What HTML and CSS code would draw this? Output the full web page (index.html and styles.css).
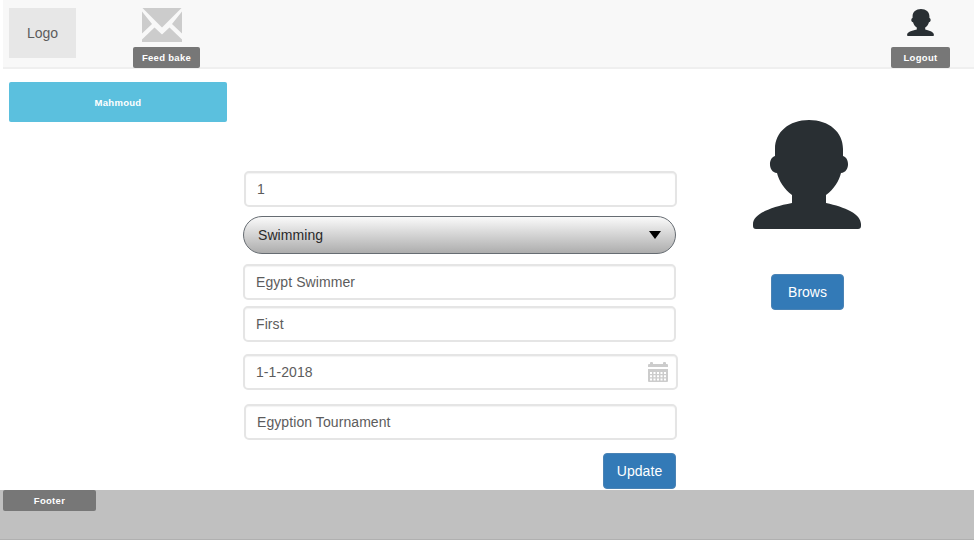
FILE: index.html
```html
<!DOCTYPE html>
<html lang="en">
<head>
<meta charset="utf-8">
<title>Profile</title>
<link rel="stylesheet" href="styles.css">
</head>
<body>
<svg width="0" height="0" class="defs" aria-hidden="true">
  <symbol id="person" viewBox="0 0 108 109">
    <path d="M56 0C76 0 90 12 90 29V36C97 38 97 52 88 53C86 61 81 69 73 75V83C92 87 108 94 108 104V106Q108 109 105 109H3Q0 109 0 106V104C0 94 18 87 39 83V75C31 69 26 61 24 53C15 52 15 38 22 36V29C22 12 36 0 56 0Z"/>
  </symbol>
</svg>
<header class="header">
  <div class="logo">Logo</div>
  <div class="feedback">
    <svg class="mail" viewBox="0 0 40 34"><path d="M.5 0H39.5L20 19.5ZM0 3.5V25.5L10 16ZM40 3.5V25.5L30 16ZM0 34V31.5L12.5 19.5L20 26.5L27.5 19.5L40 31.5V34Z"/></svg>
    <a class="label">Feed bake</a>
  </div>
  <div class="account">
    <svg class="avatar-small"><use href="#person"/></svg>
    <a class="label">Logout</a>
  </div>
</header>
<main class="main">
  <aside class="side"><div class="user">Mahmoud</div></aside>
  <form class="form">
    <div class="field number">1</div>
    <div class="select">Swimming<svg class="arrow" viewBox="0 0 12 8"><path d="M0 0H12L6 8Z"/></svg></div>
    <div class="field">Egypt Swimmer</div>
    <div class="field rank">First</div>
    <div class="field date">1-1-2018
      <svg class="calendar" viewBox="0 0 20 20"><path fill-rule="evenodd" d="M1 2H2V1Q2 0 3 0H4Q5 0 5 1V2H15V1Q15 0 16 0H17Q18 0 18 1V2H19Q20 2 20 3V5H0V3Q0 2 1 2ZM0 7H20V19Q20 20 19 20H1Q0 20 0 19ZM2 10V12H4V10ZM5.5 10V12H7.5V10ZM9 10V12H11V10ZM12.5 10V12H14.5V10ZM16 10V12H18V10ZM2 13.3V15.3H4V13.3ZM5.5 13.3V15.3H7.5V13.3ZM9 13.3V15.3H11V13.3ZM12.5 13.3V15.3H14.5V13.3ZM16 13.3V15.3H18V13.3ZM2 16.6V18.6H4V16.6ZM5.5 16.6V18.6H7.5V16.6ZM9 16.6V18.6H11V16.6ZM12.5 16.6V18.6H14.5V16.6ZM16 16.6V18.6H18V16.6Z"/></svg>
    </div>
    <div class="field event">Egyption Tournament</div>
    <div class="button update">Update</div>
  </form>
  <section class="photo">
    <svg class="avatar"><use href="#person"/></svg>
    <div class="button">Brows</div>
  </section>
</main>
<footer class="footer"><div class="label footer-label">Footer</div></footer>
</body>
</html>
```

FILE: styles.css
```css
* { box-sizing: border-box; }
body { margin: 0; height: 540px; overflow: hidden; display: flex; flex-direction: column; background: #fff; font: 14px/20px "Liberation Sans", Arial, sans-serif; color: #5c5c5c; }
.defs { display: none; }
svg { display: block; }
.header { height: 69px; flex: none; margin-left: 3px; padding: 8px 24px 0 6px; display: flex; align-items: flex-start; background: #f8f8f8; border-bottom: 2px solid #efefef; }
.logo { width: 67px; height: 50px; line-height: 50px; text-align: center; background: #e7e7e7; }
.feedback { width: 67px; margin-left: 57px; }
.mail { width: 40px; height: 34px; margin: 0 0 5px 9px; fill: #ccc; }
.label { display: block; height: 21px; line-height: 21px; border-radius: 2px; background: #777; color: #fff; font-size: 9.5px; font-weight: bold; text-align: center; letter-spacing: .3px; }
.account { width: 59px; margin-left: auto; }
.avatar-small { width: 27px; height: 27px; margin: 1px 0 11px 16px; fill: #292f33; }
.main { height: 421px; flex: none; display: flex; padding-left: 9px; }
.side { width: 218px; padding-top: 13px; }
.user { height: 40px; line-height: 41px; border-radius: 2px; background: #5bc0de; color: #fff; font-size: 9.5px; font-weight: bold; text-align: center; letter-spacing: .3px; }
.form { width: 433px; margin-left: 16px; padding-top: 102px; letter-spacing: .08px; }
.field { width: 433px; height: 36px; padding: 0 11px; display: flex; align-items: center; border: 2px solid #e5e5e5; border-radius: 5px; background: #fff; box-shadow: inset 0 1px 1px #f3f3f3; }
.number { margin-left: 1px; margin-bottom: 9px; }
.select { width: 433px; height: 38px; margin-bottom: 10px; padding: 0 14px; display: flex; align-items: center; justify-content: space-between; border: 1.5px solid #666c72; border-radius: 19px; background: linear-gradient(#fafafa, #adadad); color: #292929; }
.arrow { width: 12px; height: 8px; fill: #000; }
.rank { margin-top: 6px; }
.date { width: 435px; margin-top: 12px; justify-content: space-between; padding-right: 8px; }
.calendar { width: 20px; height: 20px; fill: #ccc; }
.event { margin: 14px 0 13px 1px; }
.button { width: 73px; height: 36px; line-height: 35px; border: 1px solid #4a83b5; border-radius: 4px; background: #337ab7; color: #fff; text-align: center; }
.update { margin-left: auto; }
.photo { width: 108px; margin-left: 77px; padding-top: 51px; }
.avatar { width: 108px; height: 109px; margin-bottom: 45px; fill: #292f33; }
.photo .button { margin-left: 18px; }
.footer { height: 50px; flex: none; background: #c0c0c0; border-bottom: 1px solid #b0b0b0; }
.footer-label { width: 93px; margin-left: 3px; }
```
